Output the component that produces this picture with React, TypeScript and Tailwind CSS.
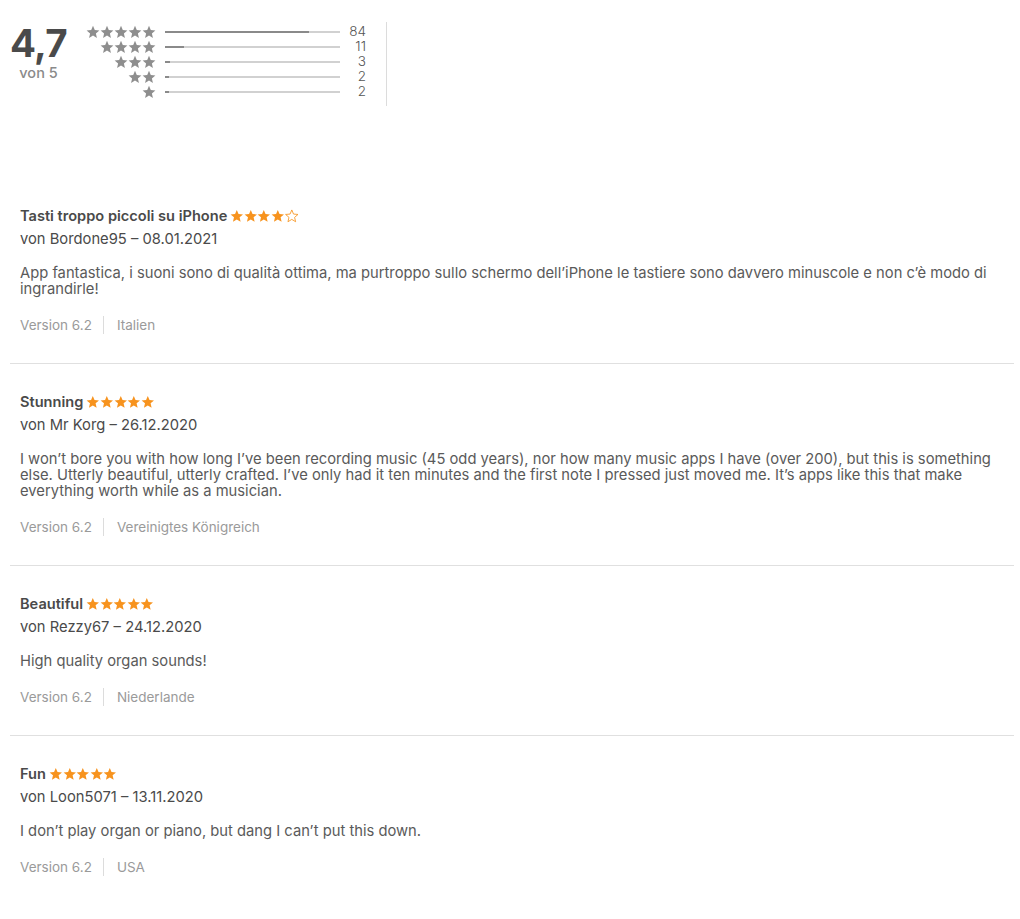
import React from 'react';

const histogram = [
  { stars: 5, count: 84, pct: 82 },
  { stars: 4, count: 11, pct: 11 },
  { stars: 3, count: 3, pct: 3 },
  { stars: 2, count: 2, pct: 2.4 },
  { stars: 1, count: 2, pct: 2.4 },
];

const reviews = [
  {
    title: 'Tasti troppo piccoli su iPhone',
    rating: 4,
    author: 'Bordone95',
    date: '08.01.2021',
    body: 'App fantastica, i suoni sono di qualità ottima, ma purtroppo sullo schermo dell’iPhone le tastiere sono davvero minuscole e non c’è modo di ingrandirle!',
    version: '6.2',
    country: 'Italien',
  },
  {
    title: 'Stunning',
    rating: 5,
    author: 'Mr Korg',
    date: '26.12.2020',
    body: 'I won’t bore you with how long I’ve been recording music (45 odd years), nor how many music apps I have (over 200), but this is something else. Utterly beautiful, utterly crafted. I’ve only had it ten minutes and the first note I pressed just moved me. It’s apps like this that make everything worth while as a musician.',
    version: '6.2',
    country: 'Vereinigtes Königreich',
  },
  {
    title: 'Beautiful',
    rating: 5,
    author: 'Rezzy67',
    date: '24.12.2020',
    body: 'High quality organ sounds!',
    version: '6.2',
    country: 'Niederlande',
  },
  {
    title: 'Fun',
    rating: 5,
    author: 'Loon5071',
    date: '13.11.2020',
    body: 'I don’t play organ or piano, but dang I can’t put this down.',
    version: '6.2',
    country: 'USA',
  },
];

// fat five-point star, like the system ★ glyph
const STAR = 'M12 1.3L15.06 8.59 22.94 9.25 16.95 14.41 18.76 22.1 12 18 5.24 22.1 7.05 14.41 1.06 9.25 8.94 8.59Z';

const Star = ({ filled = true, className }: { filled?: boolean; className: string }) => (
  <svg viewBox="0 0 24 24" className={className}>
    {filled ? (
      <path d={STAR} fill="currentColor" />
    ) : (
      <path d={STAR} fill="none" stroke="currentColor" strokeWidth="1.5" strokeLinejoin="round" />
    )}
  </svg>
);

const App = () => {
  return (
    <div className="min-h-[919px] bg-white pl-[10px] pr-[6px] pt-[22px] font-['Inter','Liberation_Sans',sans-serif]">
      <div className="flex items-start">
        <div className="flex w-[57px] flex-col items-center">
          <div className="mt-[2px] text-[38.5px] font-bold leading-[38px] tracking-[-0.6px] text-[#4a4a4a]">4,7</div>
          <div className="mt-[3px] text-[14.5px] font-medium leading-4 text-[#8a8a8a]">von 5</div>
        </div>
        <div className="ml-[19px] flex h-[84px] flex-col border-r border-[#dcdcdc] pr-5 pt-[2px]">
          {histogram.map((row) => (
            <div key={row.stars} className="flex h-[15px] items-center">
              <div className="flex w-[70px] justify-end text-[#8e8e8e]">
                {Array.from({ length: row.stars }).map((_, i) => (
                  <Star key={i} className="h-[14px] w-[14px]" />
                ))}
              </div>
              <div className="ml-[9px] h-[2px] w-[175px] bg-[#d1d1d1]">
                <div className="h-full bg-[#8a8a8a]" style={{ width: `${row.pct}%` }} />
              </div>
              <div className="w-[26px] text-right text-[13.5px] font-light leading-[15px] text-[#555]">{row.count}</div>
            </div>
          ))}
        </div>
      </div>

      <div className="mt-[72px]">
        {reviews.map((r, idx) => (
          <div
            key={r.title}
            className={`px-[10px] pt-7 pb-7 ${idx < reviews.length - 1 ? 'border-b border-[#e0e0e0]' : ''}`}
          >
            <div className="flex items-center text-[14.6px] font-semibold leading-5 text-[#4a4a4a]">
              <span>{r.title}</span>
              <span className="ml-[3px] flex text-[#f7931e]">
                {Array.from({ length: 5 }).map((_, i) => (
                  <Star key={i} filled={i < r.rating} className="h-[14px] w-[13.6px]" />
                ))}
              </span>
            </div>
            <div className="mt-[3px] text-[14.75px] leading-5 text-[#4a4a4a]">
              von {r.author} – {r.date}
            </div>
            <p className="mt-4 text-[14.75px] leading-4 text-[#5a5a5a]">{r.body}</p>
            <div className="mt-[18px] flex items-center text-[13.5px] leading-5 text-[#9a9a9a]">
              <span className="pr-[11px]">Version {r.version}</span>
              <span className="h-[18px] border-l border-[#dcdcdc]" />
              <span className="pl-[13px]">{r.country}</span>
            </div>
          </div>
        ))}
      </div>
    </div>
  );
};

export default App;
